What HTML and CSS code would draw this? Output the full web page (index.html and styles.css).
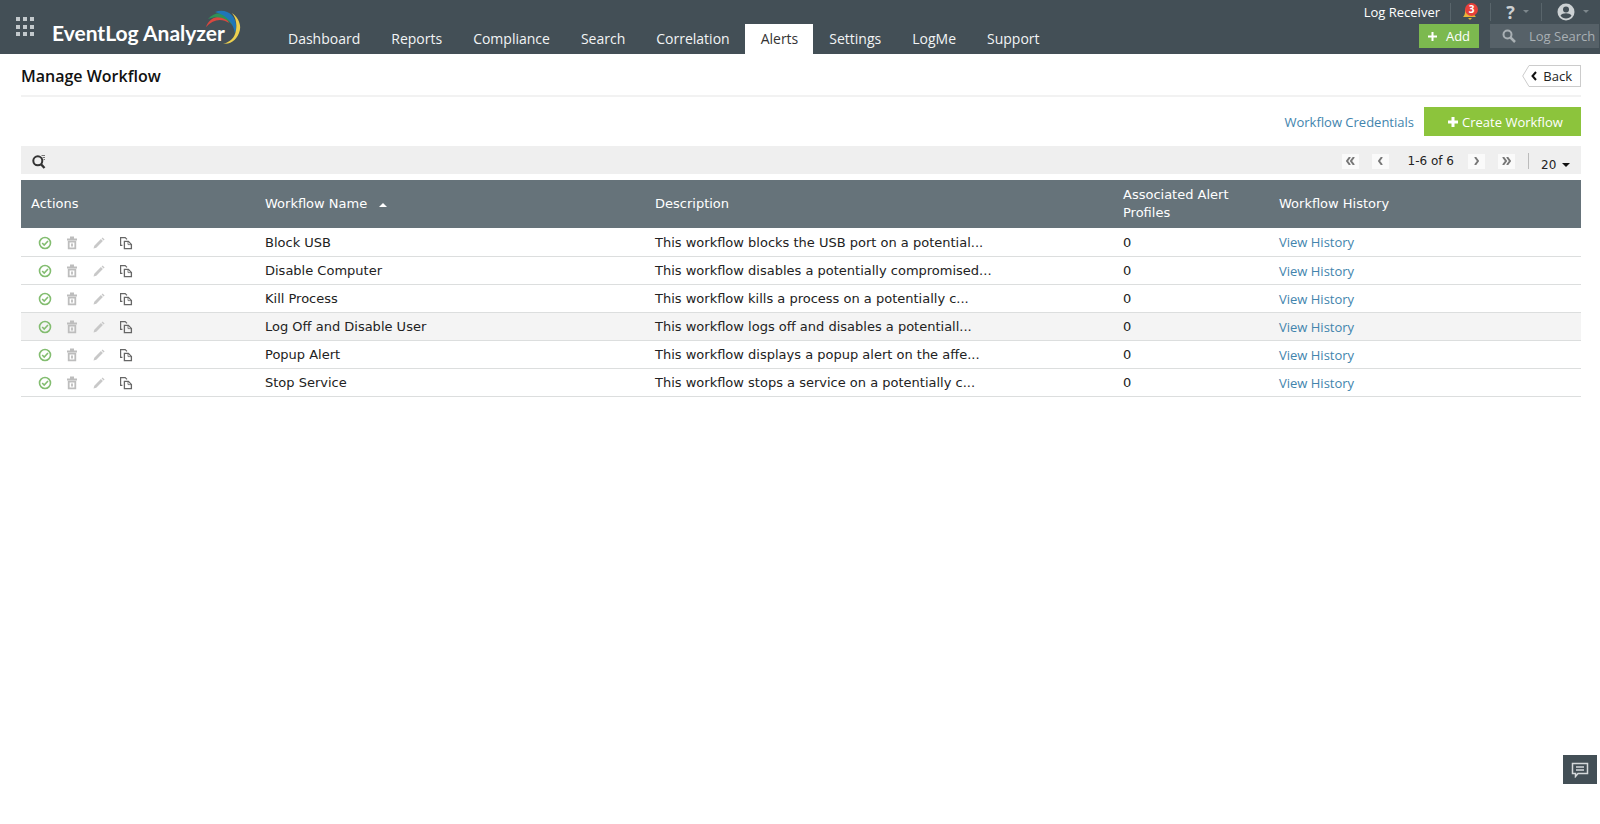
FILE: index.html
```
<!DOCTYPE html>
<html lang="en">
<head>
  <meta charset="UTF-8" />
  <meta name="viewport" content="width=device-width, initial-scale=1" />
  <title>EventLog Analyzer - Manage Workflow</title>
  <link rel="stylesheet" href="styles.css">
</head>
<body>

  <!-- icon shapes shared by the table rows -->
  <svg class="sprite" aria-hidden="true">
    <symbol id="icon-enabled" viewBox="0 0 14 14">
      <circle cx="7" cy="7" r="5.5" fill="none" stroke="#83bd70" stroke-width="1.6" />
      <path d="M4.2 7l2 2 3.8-4" fill="none" stroke="#83bd70" stroke-width="1.6" />
    </symbol>
    <symbol id="icon-delete" viewBox="0 0 14 14">
      <path d="M2 3.5h10M5 1.5h4" fill="none" stroke="#bdbdbd" stroke-width="1.8" />
      <path d="M3.7 5.7h6.6v6.6H3.7zM7 7.5v3" fill="none" stroke="#bdbdbd" stroke-width="1.8" />
    </symbol>
    <symbol id="icon-edit" viewBox="0 0 14 14">
      <path d="M1.5 12.5l.8-2.8 6.6-6.6 2 2-6.6 6.6zM9.6 2.4l1-1 2 2-1 1z" fill="#c8c8c8" />
    </symbol>
    <symbol id="icon-copy" viewBox="0 0 14 14">
      <path d="M3.4 9.4H1.6V1.6h4.6L8 3.4" fill="none" stroke="#666" stroke-width="1.2" />
      <path d="M5.4 5.4h4l3 3v4.3h-7z" fill="none" stroke="#666" stroke-width="1.3" />
      <path d="M9 5.4v3.2h3.4" fill="none" stroke="#666" stroke-width=".8" />
    </symbol>
  </svg>

  <header class="topbar">
    <button type="button" class="apps" aria-label="Applications">
      <svg width="18" height="20" viewBox="0 0 18 20" fill="#c3c9cc">
        <path d="M0 0h4v4H0zM7 0h4v4H7zM14 0h4v4h-4zM0 8h4v4H0zM7 8h4v4H7zM14 8h4v4h-4zM0 15h4v4H0zM7 15h4v4H7zM14 15h4v4h-4z" />
      </svg>
    </button>
    <a href="#" class="logo">
      <span>EventLog Analyzer</span>
      <svg class="swoosh" width="36" height="36" viewBox="0 0 36 36">
        <path d="M1 17C4 8 14 4 22 9l2 4C17 8 8 9 1 17z" fill="#d9473f" />
        <path d="M3 9C11 0 24 1 28 16 22 8 13 5 3 9z" fill="#2f9156" />
        <path d="M10 2C23-3 35 8 30 24 29 14 22 5 10 2z" fill="#1f76b8" />
        <path d="M27 3c7 5 10 13 7 20-3 8-9 11-16 11 7-2 12-6 13-14 1-6 0-12-4-17z" fill="#ecd04f" />
      </svg>
    </a>
    <nav class="tabs">
      <a href="#">Dashboard</a>
      <a href="#">Reports</a>
      <a href="#">Compliance</a>
      <a href="#">Search</a>
      <a href="#">Correlation</a>
      <a href="#" class="active">Alerts</a>
      <a href="#">Settings</a>
      <a href="#">LogMe</a>
      <a href="#">Support</a>
    </nav>
    <div class="tools">
      <div class="tools-top">
        <a href="#" class="receiver">Log Receiver</a>
        <button type="button" class="bell" aria-label="Notifications">
          <svg width="18" height="18" viewBox="0 0 18 18">
            <path d="M1 14c2-2 2-4 2-6 0-3 2-4 4-4s5 1 5 4 0 4 2 6zM6 15h4l-2 2z" fill="#e9b53a" />
          </svg>
          <span class="count">3</span>
        </button>
        <button type="button" class="help" aria-label="Help">
          <b>?</b>
          <svg width="6" height="4" viewBox="0 0 6 4"><path d="M0 0h6L3 3z" fill="#7d878c" /></svg>
        </button>
        <button type="button" class="user" aria-label="Account">
          <svg width="18" height="18" viewBox="0 0 18 18">
            <circle cx="9" cy="9" r="8.5" fill="#ccd1d3" />
            <circle cx="9" cy="6.5" r="3" fill="#434f56" />
            <path d="M3.5 12.5c2-3 9-3 11 0-2 4-9 4-11 0z" fill="#434f56" />
          </svg>
          <svg width="6" height="4" viewBox="0 0 6 4"><path d="M0 0h6L3 3z" fill="#7d878c" /></svg>
        </button>
      </div>
      <div class="tools-bottom">
        <button type="button" class="add">
          <svg width="9" height="9" viewBox="0 0 9 9"><path d="M4.5 0v9M0 4.5h9" stroke="#fff" stroke-width="2" /></svg>
          Add
        </button>
        <label class="log-search">
          <svg width="14" height="14" viewBox="0 0 14 14" fill="none" stroke="#a9b0b4">
            <circle cx="5.5" cy="5.5" r="4" stroke-width="2" />
            <path d="M8.5 8.5l4.5 4.5" stroke-width="2.5" />
          </svg>
          <input type="text" placeholder="Log Search" aria-label="Log Search" />
        </label>
      </div>
    </div>
  </header>

  <main>
    <div class="title-row">
      <h1>Manage Workflow</h1>
      <a href="#" class="back">
        <svg class="back-tip" width="8" height="22" viewBox="0 0 8 22"><path d="M8 .5H7L.7 11 7 21.5h1" fill="#fff" stroke="#ccc" /></svg>
        <span class="back-body">
          <svg width="6" height="10" viewBox="0 0 6 10"><path d="M5 1L1.5 5 5 9" fill="none" stroke="#111" stroke-width="2" /></svg>
          Back
        </span>
      </a>
    </div>

    <div class="action-row">
      <a href="#">Workflow Credentials</a>
      <button type="button" class="create">
        <svg width="10" height="10" viewBox="0 0 10 10"><path d="M5 0v10M0 5h10" stroke="#fff" stroke-width="3" /></svg>
        Create Workflow
      </button>
    </div>

    <div class="grid-bar">
      <button type="button" class="find" aria-label="Search in table">
        <svg width="14" height="15" viewBox="0 0 14 15" fill="none" stroke="#333">
          <circle cx="5.8" cy="6.8" r="4.5" stroke-width="2" />
          <path d="M8.8 10l3.7 4" stroke-width="2.4" />
          <path d="M9.5 1.5H13M10.5 3.5H13M11.5 5.5H13" stroke="#777" />
        </svg>
      </button>
      <div class="pager">
        <button type="button" class="page-btn" aria-label="First page">
          <svg width="9" height="8" viewBox="0 0 9 8"><path d="M4 0L1 4l3 4M8 0L5 4l3 4" /></svg>
        </button>
        <button type="button" class="page-btn" aria-label="Previous page">
          <svg width="5" height="8" viewBox="0 0 5 8"><path d="M4 0L1 4l3 4" /></svg>
        </button>
        <span class="range">1-6 of 6</span>
        <button type="button" class="page-btn" aria-label="Next page">
          <svg width="5" height="8" viewBox="0 0 5 8"><path d="M1 0l3 4-3 4" /></svg>
        </button>
        <button type="button" class="page-btn" aria-label="Last page">
          <svg width="9" height="8" viewBox="0 0 9 8"><path d="M1 0l3 4-3 4M5 0l3 4-3 4" /></svg>
        </button>
        <span class="divider"></span>
        <div class="page-size">
          <select aria-label="Rows per page">
            <option>20</option>
            <option>50</option>
            <option>100</option>
          </select>
          <svg width="8" height="5" viewBox="0 0 8 5"><path d="M0 0h8L4 4z" fill="#111" /></svg>
        </div>
      </div>
    </div>

    <table class="workflows">
      <thead>
        <tr>
          <th class="col-actions">Actions</th>
          <th class="col-name">Workflow Name
            <svg class="sort" width="8" height="5" viewBox="0 0 8 5"><path d="M0 4h8L4 0z" fill="#fff" /></svg>
          </th>
          <th class="col-desc">Description</th>
          <th class="col-count">Associated Alert Profiles</th>
          <th class="col-history">Workflow History</th>
        </tr>
      </thead>
      <tbody id="workflowRows"></tbody>
    </table>
  </main>

  <button type="button" class="chat" aria-label="Chat">
    <svg width="18" height="16" viewBox="0 0 18 16" fill="none" stroke="#d5d9db" stroke-width="1.5">
      <path d="M1.5 1.5h15v10H7l-2.5 3v-3h-3z" />
      <path d="M5 5h8M5 8h8" />
    </svg>
  </button>

  <script>
    const workflows = [
      { name: 'Block USB', desc: 'This workflow blocks the USB port on a potential...' },
      { name: 'Disable Computer', desc: 'This workflow disables a potentially compromised...' },
      { name: 'Kill Process', desc: 'This workflow kills a process on a potentially c...' },
      { name: 'Log Off and Disable User', desc: 'This workflow logs off and disables a potentiall...', selected: true },
      { name: 'Popup Alert', desc: 'This workflow displays a popup alert on the affe...' },
      { name: 'Stop Service', desc: 'This workflow stops a service on a potentially c...' }
    ];

    function actionButton(icon, label) {
      return `<button type="button" aria-label="${label}"><svg width="14" height="14"><use href="#icon-${icon}" /></svg></button>`;
    }

    document.getElementById('workflowRows').innerHTML = workflows.map(w => `
      <tr class="${w.selected ? 'selected' : ''}">
        <td>
          <div class="actions">
            ${actionButton('enabled', 'Disable')}
            ${actionButton('delete', 'Delete')}
            ${actionButton('edit', 'Edit')}
            ${actionButton('copy', 'Copy')}
          </div>
        </td>
        <td>${w.name}</td>
        <td>${w.desc}</td>
        <td>0</td>
        <td><a href="#">View History</a></td>
      </tr>`).join('');
  </script>

</body>
</html>
```
FILE: styles.css
```
* {
  box-sizing: border-box;
}
body {
  margin: 0;
  background: #fff;
  color: #222;
  font-family: "Open Sans", sans-serif;
  font-size: 13px;
}
a {
  color: #4284ad;
  text-decoration: none;
}
button {
  border: none;
  padding: 0;
  background: none;
  font: inherit;
  cursor: pointer;
}
svg {
  display: block;
  flex: none;
}
.sprite {
  width: 0;
  height: 0;
  position: absolute;
}

/* top bar */
.topbar {
  display: flex;
  height: 54px;
  background: #434f56;
}
.apps {
  align-self: flex-start;
  padding: 17px 0 0 16px;
}
.logo {
  position: relative;
  width: 190px;
  margin-left: 18px;
  padding-top: 20px;
  color: #fff;
  font: bold 21px/26px Lato, sans-serif;
  white-space: nowrap;
}
.swoosh {
  position: absolute;
  top: 10px;
  right: 1px;
}
.tabs {
  display: flex;
  align-items: flex-end;
  margin-left: 30px;
}
.tabs a {
  height: 30px;
  padding: 0 15px 0 16px;
  color: #f2f4f5;
  font-size: 14px;
  line-height: 29px;
}
.tabs a.active {
  background: #fff;
  color: #333;
}
.tools {
  margin-left: auto;
}
.tools-top,
.tools-bottom {
  display: flex;
  justify-content: flex-end;
  align-items: center;
}
.tools-top {
  height: 24px;
}
.tools-top > * {
  display: flex;
  align-items: center;
  justify-content: center;
  gap: 8px;
  height: 18px;
}
.tools-top > * + * {
  border-left: 1px solid #59656b;
}
.receiver {
  padding-right: 10px;
  color: #fff;
}
.bell {
  position: relative;
  width: 40px;
}
.count {
  position: absolute;
  top: 0;
  right: 12px;
  width: 13px;
  height: 13px;
  border-radius: 7px;
  background: #e8403a;
  color: #fff;
  font-size: 10px;
  font-weight: bold;
  line-height: 13px;
}
.help {
  width: 51px;
  padding-left: 3px;
  color: #ccd1d3;
  font-size: 18px;
}
.user {
  width: 59px;
  padding-left: 4px;
}
.tools-bottom {
  gap: 11px;
  padding-right: 1px;
}
.add {
  display: flex;
  align-items: center;
  justify-content: center;
  gap: 9px;
  width: 60px;
  height: 24px;
  background: #7cb94f;
  color: #fff;
}
.log-search {
  display: flex;
  align-items: center;
  gap: 13px;
  width: 109px;
  height: 24px;
  padding-left: 12px;
  background: #566168;
}
.log-search input {
  width: 70px;
  padding: 0;
  border: none;
  outline: none;
  background: none;
  color: #fff;
  font: inherit;
}
.log-search input::placeholder {
  color: #a9b0b4;
  opacity: 1;
}

/* page heading */
main {
  padding: 0 19px 0 21px;
}
.title-row {
  display: flex;
  align-items: center;
  justify-content: space-between;
  height: 43px;
  padding-top: 3px;
  border-bottom: 2px solid #f2f2f2;
}
h1 {
  margin: 0;
  color: #111;
  font-size: 16px;
  font-weight: 600;
}
.back {
  display: flex;
  height: 22px;
  color: #222;
}
.back-body {
  display: flex;
  align-items: center;
  gap: 6px;
  padding: 0 8px 0 1px;
  border: 1px solid #ccc;
  border-left: none;
}
.action-row {
  display: flex;
  align-items: center;
  justify-content: flex-end;
  gap: 10px;
  height: 49px;
}
.create {
  display: flex;
  align-items: center;
  justify-content: center;
  gap: 4px;
  width: 157px;
  height: 29px;
  padding-left: 6px;
  background: #8cc43c;
  color: #fff;
}

/* pager strip above the table */
.grid-bar {
  display: flex;
  align-items: center;
  justify-content: space-between;
  height: 28px;
  margin-bottom: 6px;
  padding: 2px 11px 0;
  background: #efefef;
}
.pager {
  display: flex;
  align-items: center;
  font-family: "DejaVu Sans", sans-serif;
  font-size: 12px;
}
.page-btn {
  display: flex;
  align-items: center;
  justify-content: center;
  width: 17px;
  height: 15px;
  margin-right: 13px;
  background: #fafafa;
}
.page-btn path {
  fill: none;
  stroke: #777;
  stroke-width: 2;
}
.range {
  margin: 0 14px 0 6px;
}
.divider {
  width: 1px;
  height: 16px;
  background: #bbb;
}
.page-size {
  display: flex;
  align-items: center;
  gap: 5px;
  padding: 8px 0 0 12px;
}
.page-size select {
  appearance: none;
  width: 16px;
  padding: 0;
  border: none;
  background: none;
  color: #222;
  font: inherit;
}

/* workflow table */
.workflows {
  width: 100%;
  border-collapse: collapse;
  table-layout: fixed;
  font-family: "DejaVu Sans", sans-serif;
  font-size: 13px;
}
.workflows th {
  height: 48px;
  padding: 0 10px;
  background: #66737a;
  color: #fff;
  font-weight: normal;
  line-height: 18px;
  text-align: left;
}
.workflows td {
  height: 28px;
  padding: 2px 10px 0;
  border-bottom: 1px solid #dcdede;
  line-height: 18px;
  white-space: nowrap;
}
.workflows td a {
  font-family: "Open Sans", sans-serif;
}
.col-actions {
  width: 15%;
}
.col-name {
  width: 25%;
}
.col-desc {
  width: 30%;
}
.col-count {
  width: 10%;
}
.col-history {
  width: 20%;
}
.workflows .sort {
  display: inline-block;
  margin-left: 8px;
}
.selected {
  background: #f4f4f4;
}
.actions {
  display: flex;
  gap: 13px;
  padding-left: 7px;
}

/* floating chat button */
.chat {
  position: fixed;
  right: 3px;
  bottom: 40px;
  display: flex;
  align-items: center;
  justify-content: center;
  width: 34px;
  height: 29px;
  background: #434f56;
}
```
